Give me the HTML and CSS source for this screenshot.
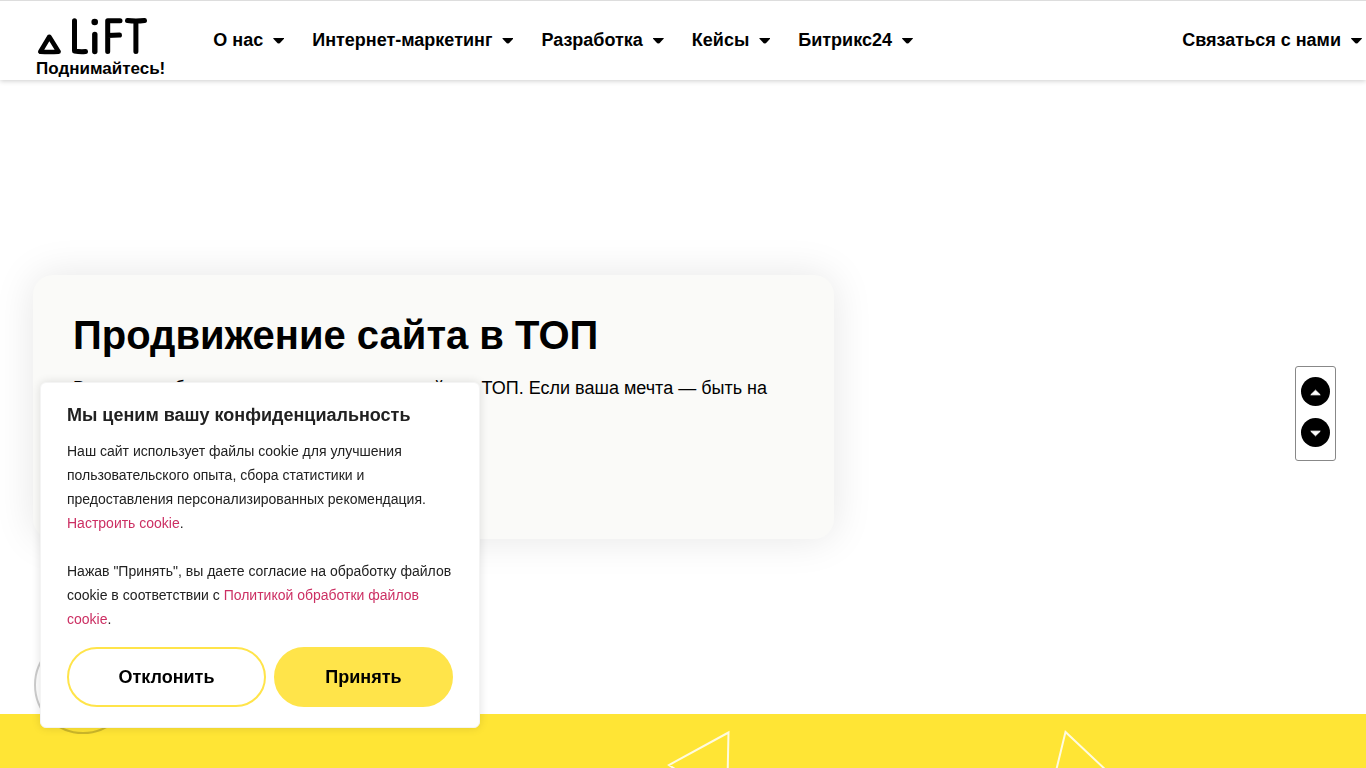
FILE: index.html
```html
<!DOCTYPE html>
<html lang="ru">
<head>
  <meta charset="UTF-8">
  <meta name="viewport" content="width=device-width, initial-scale=1.0">
  <title>Продвижение сайта в ТОП | LiFT</title>
  <link rel="stylesheet" href="styles.css">
</head>
<body>
  <!-- Шапка -->
  <header class="header">
    <a href="#" class="logo">
      <svg width="112" height="43" viewBox="0 0 112 43" fill="none" stroke="#000" stroke-width="5" stroke-linecap="round" stroke-linejoin="round" aria-hidden="true">
        <path d="M13.300 20.800 L4.300 35.700 Q13.300 36.300 22.600 35.700 Z" stroke-width="4.600"/>
        <path d="M38.500 4.800 V35 Q44 36 49.500 35.500"/>
        <path d="M58.800 18.500 V35.500" stroke-width="5.400"/>
        <circle cx="58.700" cy="6" r="3.300" fill="#000" stroke="none"/>
        <path d="M71.700 35.500 V4.800 H84 M71.700 19.500 L83.500 19"/>
        <path d="M91.500 4.500 Q100 5.500 108.500 4.500 M99.900 5 V35.500"/>
      </svg>
      <span>Поднимайтесь!</span>
    </a>
    <nav class="menu">
      <a href="#" class="menu-item">О нас</a>
      <a href="#" class="menu-item">Интернет-маркетинг</a>
      <a href="#" class="menu-item">Разработка</a>
      <a href="#" class="menu-item">Кейсы</a>
      <a href="#" class="menu-item">Битрикс24</a>
    </nav>
    <a href="#" class="menu-item contact">Связаться с нами</a>
  </header>

  <!-- Первый экран -->
  <main class="hero">
    <div class="hero-card">
      <h1>Продвижение сайта в ТОП</h1>
      <p>Вам просто будет полезно продвижение сайта в ТОП. Если ваша мечта — быть на первой странице, звоните.</p>
    </div>
  </main>

  <section class="banner">
    <span class="circle"></span>
    <svg class="triangles" viewBox="0 0 1366 54" preserveAspectRatio="xMidYMin slice" fill="none" stroke="#fffbe0" stroke-width="2" aria-hidden="true">
      <path d="M728.500 18.500 L669 51 L727 90 Z"/>
      <path d="M1065.500 18 L1048 90 L1142 90 Z"/>
    </svg>
  </section>

  <!-- Кнопки прокрутки -->
  <div class="scroller">
    <button aria-label="Вверх"><svg width="11" height="7" viewBox="0 0 11 7" fill="#fff" stroke="#fff" stroke-linejoin="round"><path d="M.8 5.800 L5.500 1.200 L10.200 5.800 Z"/></svg></button>
    <button aria-label="Вниз"><svg width="11" height="7" viewBox="0 0 11 7" fill="#fff" stroke="#fff" stroke-linejoin="round"><path d="M.8 1.200 L5.500 5.800 L10.200 1.200 Z"/></svg></button>
  </div>

  <!-- Окно cookie -->
  <div class="cookie" role="dialog" aria-labelledby="cookie-title">
    <h2 id="cookie-title">Мы ценим вашу конфиденциальность</h2>
    <p>Наш сайт использует файлы cookie для улучшения пользовательского опыта, сбора статистики и предоставления персонализированных рекомендация. <a href="#">Настроить cookie</a>.</p>
    <p>Нажав "Принять", вы даете согласие на обработку файлов cookie в соответствии с <a href="#">Политикой обработки файлов cookie</a>.</p>
    <div class="cookie-buttons">
      <button class="btn-reject">Отклонить</button>
      <button class="btn-accept">Принять</button>
    </div>
  </div>
</body>
</html>
```

FILE: styles.css
```css
* {
  box-sizing: border-box;
}
body {
  display: flex;
  flex-direction: column;
  min-height: 100vh;
  margin: 0;
  font-family: "Liberation Sans", Arial, sans-serif;
  color: #000;
  background-color: #fff;
}
.header {
  display: flex;
  align-items: center;
  height: 80px;
  padding: 0 4px 2px 36px;
  border-top: 1px solid #ddd;
  box-shadow: 0 1px 5px rgba(0, 0, 0, 0.2);
}
.logo {
  display: flex;
  flex-direction: column;
  margin-top: 16px;
  margin-right: 48px;
  color: #000;
  font-size: 17px;
  font-weight: bold;
  line-height: 20px;
  text-decoration: none;
}
.menu {
  display: flex;
  gap: 28px;
}
.menu-item {
  display: flex;
  align-items: center;
  gap: 10px;
  color: #000;
  font-size: 18px;
  font-weight: bold;
  line-height: 20px;
  text-decoration: none;
  white-space: nowrap;
}
.menu-item::after {
  content: "";
  width: 11px;
  height: 6px;
  margin-top: 2px;
  background-color: #000;
  clip-path: polygon(5% 0, 95% 0, 100% 18%, 60% 95%, 50% 100%, 40% 95%, 0 18%);
}
.contact {
  margin-left: auto;
}
.hero {
  padding: 195px 33px 175px;
}
.hero-card {
  width: 100%;
  max-width: 801px;
  min-height: 264px;
  padding: 40px;
  background-color: #fafaf8;
  border-radius: 20px;
  box-shadow: 0 0 40px rgba(0, 0, 0, 0.1);
}
.hero-card h1 {
  margin: 0 0 18px;
  font-size: 40px;
  line-height: 40px;
}
.hero-card p {
  margin: 0;
  font-size: 18px;
  line-height: 30px;
}
.banner {
  position: relative;
  flex: 1;
  min-height: 54px;
  background-color: #ffe535;
}
.triangles {
  display: block;
  width: 100%;
  height: 54px;
}
.circle {
  position: absolute;
  top: -78px;
  left: 34px;
  width: 98px;
  height: 98px;
  border: 2px solid rgba(0, 0, 0, 0.2);
  border-radius: 50%;
}
.scroller {
  position: fixed;
  top: 366px;
  right: 30px;
  display: flex;
  flex-direction: column;
  gap: 12px;
  padding: 10px 5px 13px;
  background-color: #fff;
  border: 1px solid #888;
  border-radius: 3px;
}
.scroller button {
  display: flex;
  align-items: center;
  justify-content: center;
  width: 29px;
  height: 29px;
  padding: 2px 0 0;
  background-color: #000;
  border: none;
  border-radius: 50%;
  cursor: pointer;
}
.cookie {
  position: fixed;
  left: 40px;
  bottom: 40px;
  width: 440px;
  max-width: calc(100% - 80px);
  padding: 20px 26px;
  color: #212121;
  background-color: #fff;
  border: 1px solid #f4f4f4;
  border-radius: 6px;
  box-shadow: 0 0 10px rgba(0, 0, 0, 0.12);
}
.cookie h2 {
  margin: 0 0 12px;
  font-size: 18px;
  line-height: 24px;
}
.cookie p {
  margin: 0 0 24px;
  font-size: 14px;
  line-height: 24px;
}
.cookie p a {
  color: #cc2f63;
  text-decoration: none;
}
.cookie p:last-of-type {
  margin-bottom: 16px;
}
.cookie-buttons {
  display: flex;
  gap: 8px;
}
.cookie-buttons button {
  flex: 1 1 auto;
  height: 60px;
  color: #000;
  font-family: inherit;
  font-size: 18px;
  font-weight: bold;
  border: 2px solid #ffe44a;
  border-radius: 30px;
  cursor: pointer;
}
.cookie-buttons .btn-reject {
  background-color: #fff;
}
.cookie-buttons .btn-accept {
  background-color: #ffe44a;
}
```
